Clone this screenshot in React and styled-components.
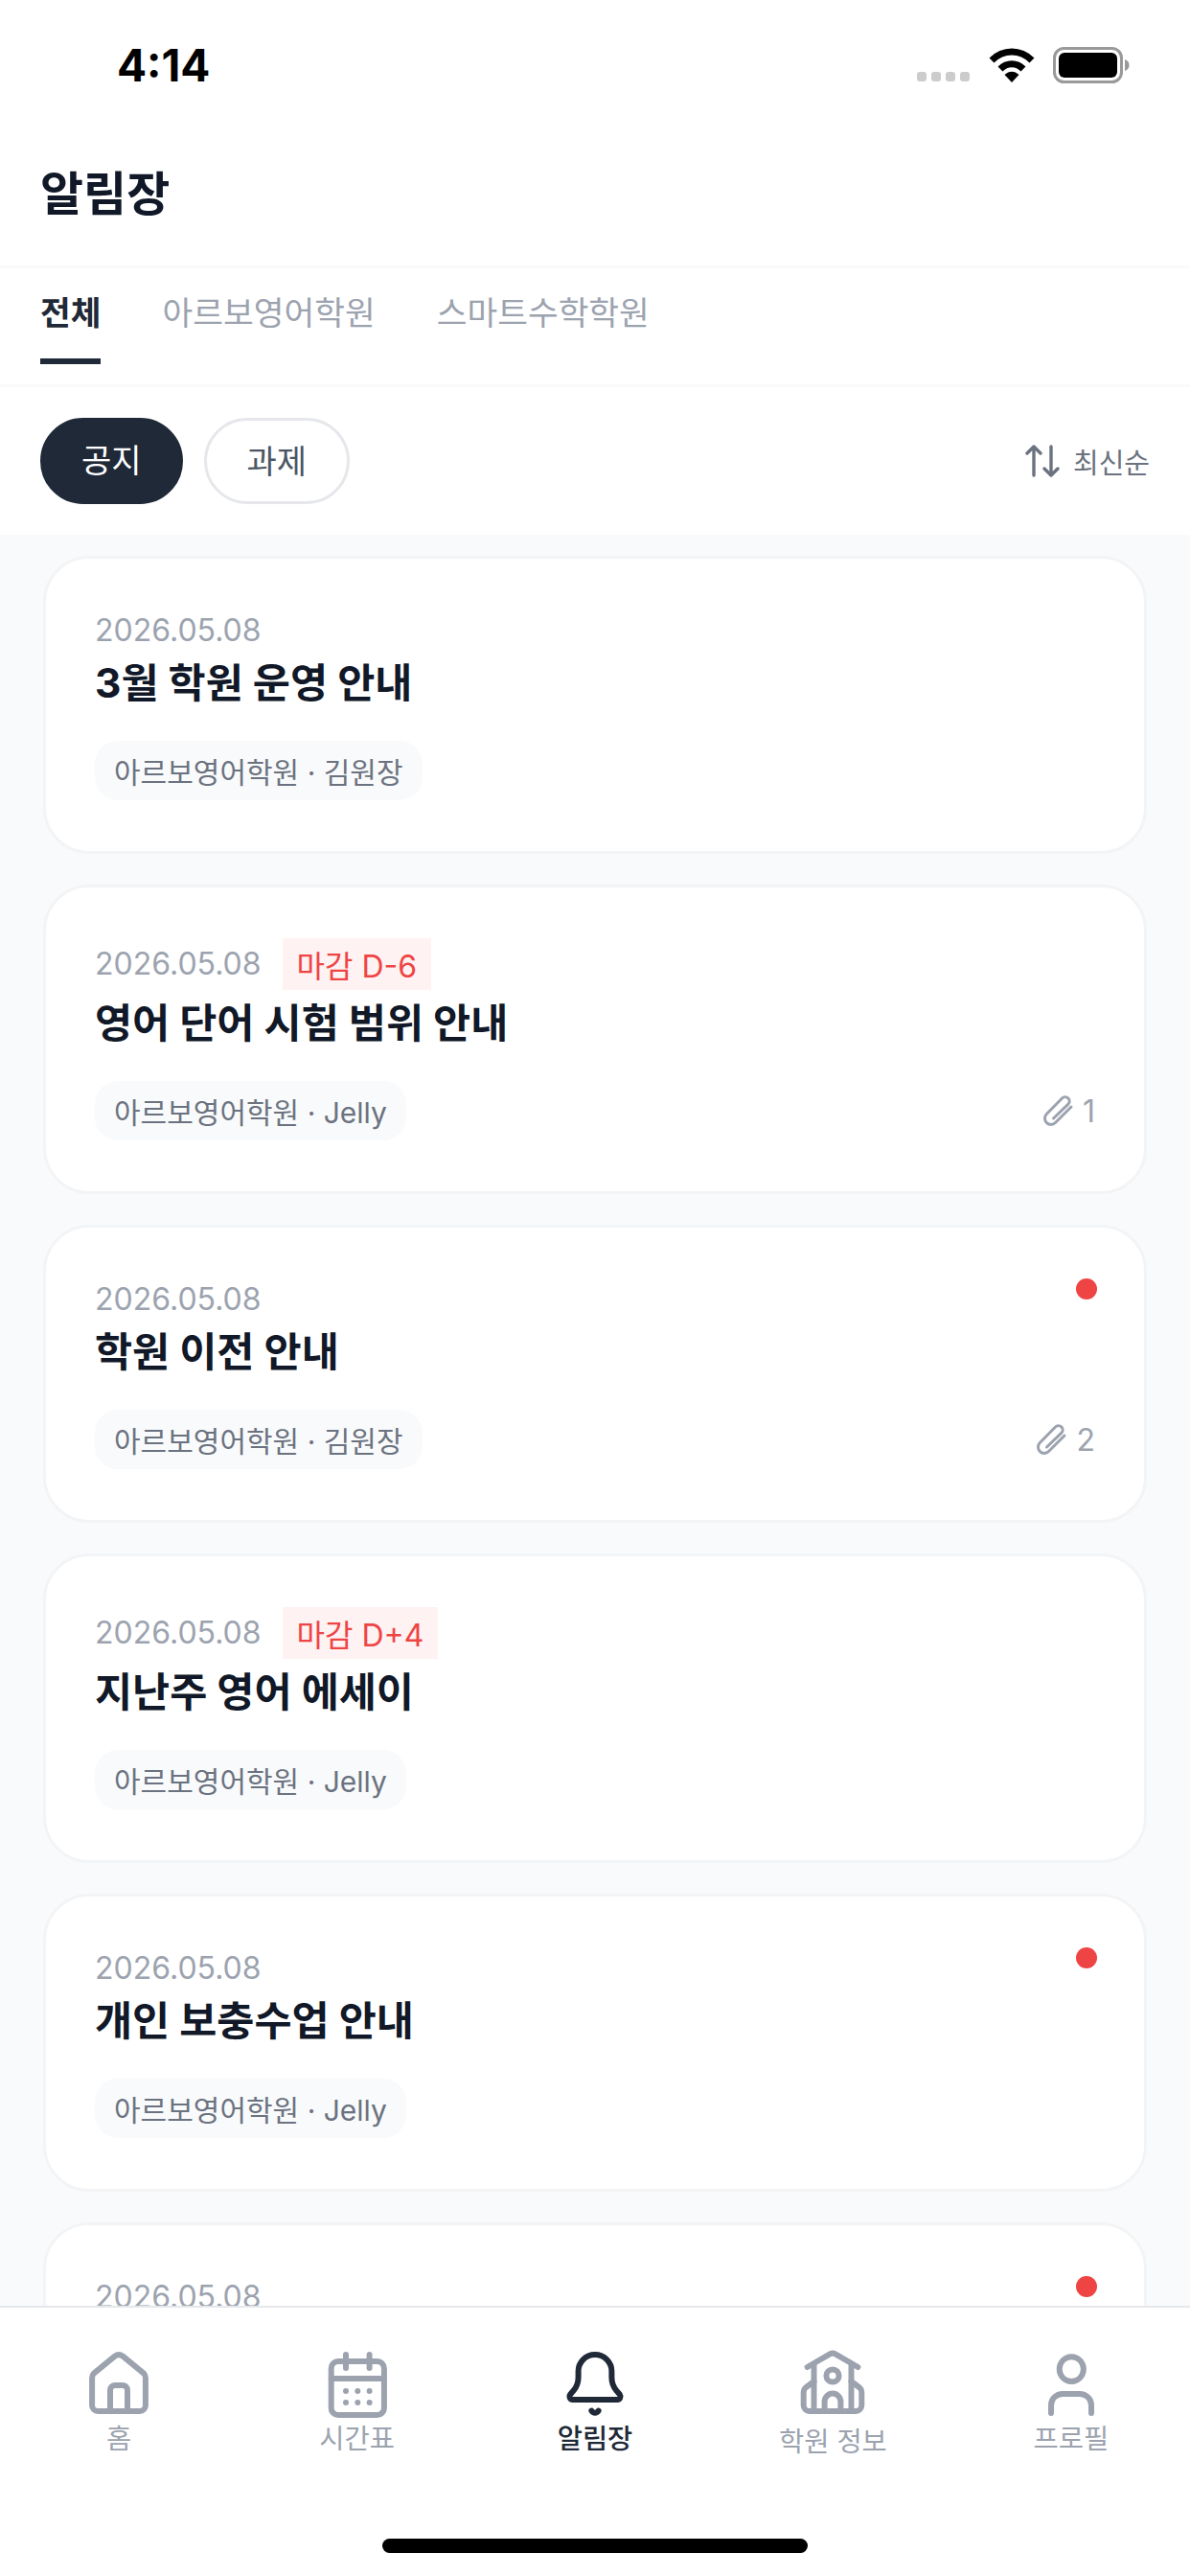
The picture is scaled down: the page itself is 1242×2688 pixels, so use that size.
import React from "react";
import styled, { createGlobalStyle } from "styled-components";

const GlobalStyle = createGlobalStyle`
  html, body {
    margin: 0;
    padding: 0;
    background: #fff;
  }
  body {
    font-family: "Inter", "Noto Sans CJK KR", sans-serif;
  }
  * {
    box-sizing: border-box;
  }
`;

const Screen = styled.div`
  width: 1242px;
  height: 2688px;
  display: flex;
  flex-direction: column;
  overflow: hidden;
  background: #fff;
`;

const StatusBar = styled.div`
  height: 140px;
  flex-shrink: 0;
  padding: 44px 63px 0 122px;
  display: flex;
  justify-content: space-between;
  align-items: flex-start;
`;

const Clock = styled.div`
  font-size: 46px;
  line-height: 48px;
  font-weight: 700;
  color: #000;
`;

const StatusIcons = styled.div`
  display: flex;
  align-items: flex-start;
  padding-top: 5px;
  gap: 19px;
`;

const SignalDots = styled.div`
  display: flex;
  gap: 5px;
  padding-top: 26px;
  margin-right: 1px;
`;

const SignalDot = styled.span`
  width: 10px;
  height: 10px;
  border-radius: 3px;
  background: #ccc;
`;

const Header = styled.div`
  height: 140px;
  flex-shrink: 0;
  padding: 0 42px 21px;
  display: flex;
  align-items: center;
  border-bottom: 3px solid #f9fafb;
`;

const Title = styled.h1`
  margin: 0;
  font-size: 49px;
  font-weight: 700;
  color: #111827;
`;

const Tabs = styled.div`
  height: 124px;
  flex-shrink: 0;
  padding: 0 42px;
  display: flex;
  gap: 64px;
  border-bottom: 3px solid #f9fafb;
`;

const Tab = styled.div`
  height: 100px;
  padding-top: 18px;
  font-size: 34.5px;
  line-height: 58px;
  font-weight: ${(p) => (p.$active ? 700 : 400)};
  color: ${(p) => (p.$active ? "#1f2937" : "#9ca3af")};
  border-bottom: 6px solid ${(p) => (p.$active ? "#1f2937" : "transparent")};
`;

const Toolbar = styled.div`
  height: 154px;
  flex-shrink: 0;
  padding: 32px 42px 0;
  display: flex;
  justify-content: space-between;
  align-items: flex-start;
`;

const Chips = styled.div`
  display: flex;
  gap: 22px;
`;

const Chip = styled.div`
  height: 90px;
  padding: 0 ${(p) => (p.$active ? "40px 6px" : "42px 4px")};
  border-radius: 45px;
  display: flex;
  align-items: center;
  font-size: 34px;
  color: ${(p) => (p.$active ? "#fff" : "#4b5563")};
  background: ${(p) => (p.$active ? "#1f2937" : "#fff")};
  border: 3px solid ${(p) => (p.$active ? "#1f2937" : "#e5e7eb")};
`;

const Sort = styled.div`
  height: 90px;
  display: flex;
  align-items: center;
  gap: 14px;
  font-size: 29px;
  color: #6b7280;
`;

const List = styled.div`
  flex: 1;
  min-height: 0;
  overflow: hidden;
  padding: 22px 45px 0;
  display: flex;
  flex-direction: column;
  gap: 32px;
  background: #f9fafb;
`;

const Card = styled.div`
  position: relative;
  flex-shrink: 0;
  padding: 53px 51px;
  background: #fff;
  border: 3px solid #f3f4f6;
  border-radius: 48px;
`;

const Dot = styled.span`
  position: absolute;
  top: 53px;
  right: 49px;
  width: 22px;
  height: 22px;
  border-radius: 50%;
  background: #ef4444;
`;

const MetaRow = styled.div`
  display: flex;
  align-items: flex-start;
  gap: 22px;
  min-height: 44px;
`;

const DateText = styled.span`
  font-size: 32px;
  line-height: ${(p) => (p.$tall ? 54 : 44)}px;
  color: #9ca3af;
`;

const Deadline = styled.span`
  height: 54px;
  margin-bottom: 2px;
  padding: 0 15px;
  display: flex;
  align-items: center;
  font-size: 32px;
  color: #ef4444;
  background: #fef2f2;
`;

const CardTitle = styled.div`
  margin-top: 4px;
  font-size: 42.5px;
  line-height: 58px;
  font-weight: 700;
  color: #111827;
`;

const FootRow = styled.div`
  margin-top: 31px;
  display: flex;
  justify-content: space-between;
  align-items: center;
`;

const Source = styled.span`
  height: 62px;
  padding: 0 20px;
  display: flex;
  align-items: center;
  font-size: 30px;
  color: #6b7280;
  background: #f9fafb;
  border-radius: 24px;
`;

const Attachment = styled.span`
  display: flex;
  align-items: center;
  gap: 8px;
  font-size: 32px;
  color: #9ca3af;
`;

const Nav = styled.div`
  flex-shrink: 0;
  height: 282px;
  position: relative;
  display: grid;
  grid-template-columns: repeat(5, 1fr);
  align-items: start;
  padding-top: 44px;
  background: #fff;
  border-top: 2px solid #e5e7eb;
`;

const NavItem = styled.div`
  display: flex;
  flex-direction: column;
  align-items: center;
  font-size: 28.5px;
  line-height: 36px;
  font-weight: ${(p) => (p.$active ? 500 : 400)};
  color: ${(p) => (p.$active ? "#1f2937" : "#9ca3af")};
`;

const NavLabel = styled.span`
  margin-top: ${(p) => (p.$drop ? 6 : 3)}px;
`;

const HomeIndicator = styled.div`
  position: absolute;
  left: 399px;
  bottom: 24px;
  width: 444px;
  height: 15px;
  border-radius: 8px;
  background: #000;
`;

const Icon = styled.svg`
  width: 72px;
  height: 72px;
  display: block;
  fill: none;
  stroke: currentColor;
  stroke-width: 2;
  stroke-linecap: round;
  stroke-linejoin: round;
`;

const HomeIcon = () => (
  <Icon viewBox="0 0 24 24">
    <path d="M3.3 8.2 10.6 2.2Q12 1.2 13.4 2.2L20.7 8.2Q21.3 8.8 21.3 9.7V19.3a2 2 0 0 1-2 2H4.7a2 2 0 0 1-2-2V9.7Q2.7 8.8 3.3 8.2Z" />
    <path d="M9 21.3V14a1.7 1.7 0 0 1 1.7-1.7h2.6A1.7 1.7 0 0 1 15 14V21.3" />
  </Icon>
);

const CalendarIcon = () => (
  <Icon viewBox="0 0 24 24">
    <rect x="2.9" y="4" width="18.4" height="18.7" rx="2.4" />
    <path d="M8 1.7V6.3M16.2 1.7V6.3M2.9 10H21.3" />
    <g fill="currentColor" stroke="none">
      <circle cx="8" cy="14.3" r="1" />
      <circle cx="12.1" cy="14.3" r="1" />
      <circle cx="16.2" cy="14.3" r="1" />
      <circle cx="8" cy="18.3" r="1" />
      <circle cx="12.1" cy="18.3" r="1" />
      <circle cx="16.2" cy="18.3" r="1" />
    </g>
  </Icon>
);

const BellIcon = () => (
  <Icon viewBox="0 0 24 24">
    <path d="M6.2 7.5a5.8 5.8 0 0 1 11.6 0v2c0 2 .6 3.4 1.6 4.6l1.2 1.4c.5.7.1 1.8-.8 1.8H4.2c-.9 0-1.3-1.1-.8-1.8l1.2-1.4c1-1.2 1.6-2.6 1.6-4.6Z" />
    <path d="M10.8 21.2c.6.9 1.8.9 2.4 0" />
  </Icon>
);

const SchoolIcon = () => (
  <Icon viewBox="0 0 24 24">
    <path d="M3.2 6 11.2 1.4Q12 1 12.8 1.4L20.8 6" />
    <path d="M5.5 4.8V21.3M18.5 4.8V21.3" />
    <path d="M5.5 11 2.8 13Q1.9 13.7 1.9 14.8V19.3a2 2 0 0 0 2 2H20.1a2 2 0 0 0 2-2V14.8Q22.1 13.7 21.2 13L18.5 11" />
    <circle cx="12" cy="9" r="2.2" />
    <path d="M9.2 21.3V18a2.8 2.8 0 0 1 5.6 0V21.3" />
  </Icon>
);

const PersonIcon = () => (
  <Icon viewBox="0 0 24 24">
    <ellipse cx="12.1" cy="6.7" rx="4.2" ry="4.3" />
    <path d="M5 22V19.3a4 4 0 0 1 4-4h6a4 4 0 0 1 4 4V22" />
  </Icon>
);

const WifiIcon = () => (
  <svg width="48" height="37" viewBox="0 0 48 37">
    <path d="M3 14C15 2 33 2 45 14" fill="none" stroke="#000" strokeWidth="7" />
    <path d="M12 23C19 16 29 16 36 23" fill="none" stroke="#000" strokeWidth="7" />
    <path d="M16.5 29C21 24.5 27 24.5 31.5 29L24 37Z" fill="#000" />
  </svg>
);

const BatteryIcon = () => (
  <svg width="80" height="38" viewBox="0 0 80 38">
    <rect x="1.5" y="1.5" width="70" height="35" rx="10" fill="none" stroke="#999" strokeWidth="3" />
    <rect x="6" y="6" width="61" height="26" rx="6" fill="#000" />
    <path d="M75 13C78 14 79.5 16 79.5 19S78 24 75 25Z" fill="#999" />
  </svg>
);

const SortIcon = () => (
  <svg width="36" height="34" viewBox="0 0 36 34" fill="none" stroke="#6b7280" strokeWidth="3.4" strokeLinecap="round" strokeLinejoin="round">
    <path d="M9 32V2M2 9 9 2 16 9" />
    <path d="M27 2V32M20 25 27 32 34 25" />
  </svg>
);

const ClipIcon = () => (
  <svg width="36" height="36" viewBox="0 0 36 36" fill="none" stroke="#9ca3af" strokeWidth="3" strokeLinecap="round">
    <path d="M32 14 15.5 30.5a6.4 6.4 0 0 1-9.2-9L22.5 5a4.4 4.4 0 0 1 6.4 6.2L13.5 26" />
  </svg>
);

const notices = [
  { title: "3월 학원 운영 안내", source: "아르보영어학원 · 김원장" },
  { title: "영어 단어 시험 범위 안내", source: "아르보영어학원 · Jelly", deadline: "마감 D-6", files: 1 },
  { title: "학원 이전 안내", source: "아르보영어학원 · 김원장", files: 2, unread: true },
  { title: "지난주 영어 에세이", source: "아르보영어학원 · Jelly", deadline: "마감 D+4" },
  { title: "개인 보충수업 안내", source: "아르보영어학원 · Jelly", unread: true },
  { unread: true },
];

const navItems = [
  { label: "홈", icon: <HomeIcon /> },
  { label: "시간표", icon: <CalendarIcon /> },
  { label: "알림장", icon: <BellIcon />, active: true },
  { label: "학원 정보", icon: <SchoolIcon />, drop: true },
  { label: "프로필", icon: <PersonIcon /> },
];

export default function App() {
  return (
    <Screen>
      <GlobalStyle />
      <StatusBar>
        <Clock>4:14</Clock>
        <StatusIcons>
          <SignalDots>
            <SignalDot />
            <SignalDot />
            <SignalDot />
            <SignalDot />
          </SignalDots>
          <WifiIcon />
          <BatteryIcon />
        </StatusIcons>
      </StatusBar>
      <Header>
        <Title>알림장</Title>
      </Header>
      <Tabs>
        <Tab $active>전체</Tab>
        <Tab>아르보영어학원</Tab>
        <Tab>스마트수학학원</Tab>
      </Tabs>
      <Toolbar>
        <Chips>
          <Chip $active>공지</Chip>
          <Chip>과제</Chip>
        </Chips>
        <Sort>
          <SortIcon />
          최신순
        </Sort>
      </Toolbar>
      <List>
        {notices.map((n, i) => (
          <Card key={i}>
            {n.unread && <Dot />}
            <MetaRow>
              <DateText $tall={!!n.deadline}>2026.05.08</DateText>
              {n.deadline && <Deadline>{n.deadline}</Deadline>}
            </MetaRow>
            {n.title && <CardTitle>{n.title}</CardTitle>}
            {n.source && (
              <FootRow>
                <Source>{n.source}</Source>
                {n.files && (
                  <Attachment>
                    <ClipIcon />
                    {n.files}
                  </Attachment>
                )}
              </FootRow>
            )}
          </Card>
        ))}
      </List>
      <Nav>
        {navItems.map((item) => (
          <NavItem key={item.label} $active={item.active}>
            {item.icon}
            <NavLabel $drop={item.drop}>{item.label}</NavLabel>
          </NavItem>
        ))}
        <HomeIndicator />
      </Nav>
    </Screen>
  );
}
